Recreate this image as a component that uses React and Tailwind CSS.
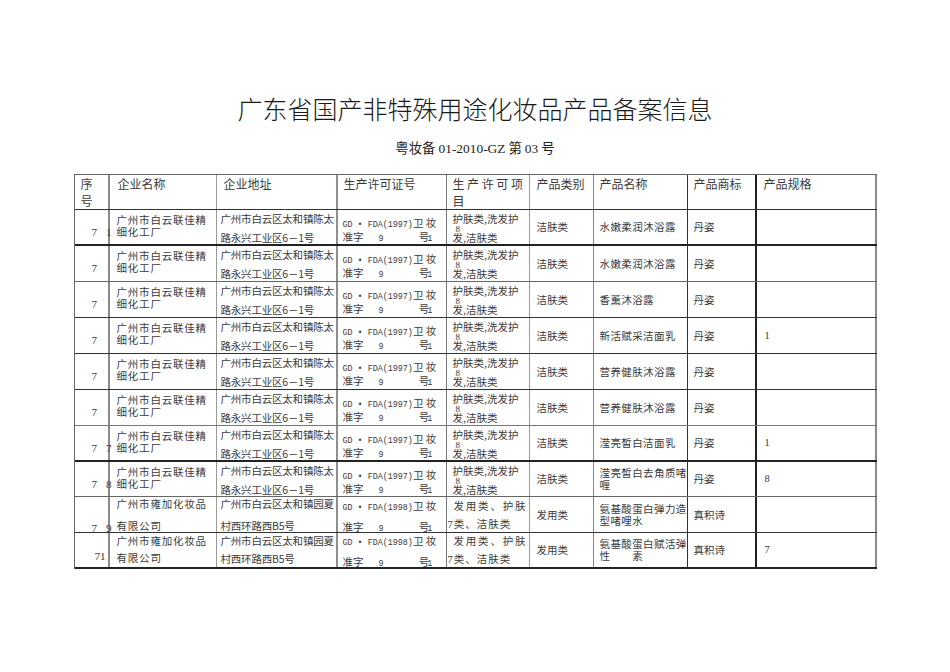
import React from 'react'

const cjk = '"Noto Sans CJK SC", "Liberation Serif", serif'
const serif = '"Liberation Serif", "Noto Sans CJK SC", serif'
const mono = '"Liberation Mono", "Noto Sans CJK SC", monospace'

// column widths incl. right border, literal classes
const C = [
  'w-[35px] border-r-2 border-[#8a8a8a]',
  'w-[107px] border-r border-[#9a9a9a]',
  'w-[121px] border-r-2 border-[#8f8f8f]',
  'w-[109px] border-r border-[#777]',
  'w-[83px] border-r border-[#999]',
  'w-[64px] border-r border-[#888]',
  'w-[94px] border-r border-[#333]',
  'w-[69px] border-r-2 border-[#222]',
  'w-[120px] border-r-2 border-[#8a8a8a]',
]

const liangA = ['广州市白云联佳精', '细化工厂']
const addrA = ['广州市白云区太和镇陈太', '路永兴工业区6－1号']
const liangB = ['广州市雍加化妆品', '有限公司']
const addrB = ['广州市白云区太和镇园夏', '村西环路西B5号']

const rows = [
  { idx: '7', sub: '1', mode: 'A', year: '1997', cat: '洁肤类', name: ['水嫩柔润沐浴露'], brand: '丹姿', spec: '', h: 'h-[36px] border-b-2 border-[#222]' },
  { idx: '7', mode: 'A', year: '1997', cat: '洁肤类', name: ['水嫩柔润沐浴露'], brand: '丹姿', spec: '', h: 'h-[36px] border-b border-[#666]' },
  { idx: '7', mode: 'A', year: '1997', cat: '洁肤类', name: ['香薰沐浴露'], brand: '丹姿', spec: '', h: 'h-[36px] border-b border-[#333]' },
  { idx: '7', mode: 'A', year: '1997', cat: '洁肤类', name: ['新活赋采洁面乳'], brand: '丹姿', spec: '1', h: 'h-[36px] border-b border-[#333]' },
  { idx: '7', mode: 'A', year: '1997', cat: '洁肤类', name: ['营养健肤沐浴露'], brand: '丹姿', spec: '', h: 'h-[36px] border-b border-[#333]' },
  { idx: '7', mode: 'A', year: '1997', cat: '洁肤类', name: ['营养健肤沐浴露'], brand: '丹姿', spec: '', h: 'h-[36px] border-b border-[#777]' },
  { idx: '7', sub: '7', mode: 'A', year: '1997', cat: '洁肤类', name: ['滢亮皙白洁面乳'], brand: '丹姿', spec: '1', h: 'h-[36px] border-b-2 border-[#222]' },
  { idx: '7', sub: '8', mode: 'A', year: '1997', cat: '洁肤类', name: ['滢亮皙白去角质啫', '喱'], brand: '丹姿', spec: '8', h: 'h-[35px] border-b border-[#666]' },
  { idx: '7', sub: '9', mode: 'B', year: '1998', cat: '发用类', name: ['氨基酸蛋白弹力造', '型啫哩水'], brand: '真积诗', spec: '', h: 'h-[36px] border-b border-[#333]' },
  { idx: '71', mode: 'B', tight: true, year: '1998', cat: '发用类', name: ['氨基酸蛋白赋活弹', '性\u3000\u3000素'], brand: '真积诗', spec: '7', h: 'h-[36px] border-b-2 border-[#222]' },
]

function Row({ r }) {
  const a = r.mode === 'A'
  const comp = a ? liangA : liangB
  const addr = a ? addrA : addrB
  const idxPad = a ? 'pt-[16px]' : r.tight ? 'pt-[17px]' : 'pt-[25px]'
  const two = a ? 'pt-[4px]' : r.tight ? 'pt-[2px] gap-[5px]' : 'pt-[1px] gap-[10px]'
  const twoAddr = a ? 'pt-[3px] gap-[7px]' : r.tight ? 'pt-[2px] gap-[6px]' : 'pt-[1px] gap-[10px]'
  const lic = a ? 'pt-[7px] gap-0' : r.tight ? 'pt-[2px] gap-[7px]' : 'pt-[3px] gap-[7px]'
  const proj = r.tight ? 'pt-[2px] gap-[6px]' : 'pt-[3px] gap-[6px]'
  return (
    <div className={`flex ${r.h} text-[#3a3a3a]`}>
      <div className={`${C[0]} flex ${idxPad} ${r.idx === '71' ? 'pl-[20px]' : 'pl-[17px]'} text-[11px] leading-[12px]`} style={{ fontFamily: serif }}>
        <span>{r.idx}</span>
        {r.sub && <span className="ml-[9px] -mr-[4px]">{r.sub}</span>}
      </div>
      <div className={`${C[1]} flex flex-col pl-[7px] text-[10.5px] leading-[12px] tracking-[0.8px] ${two}`}>
        <span>{comp[0]}</span>
        <span>{comp[1]}</span>
      </div>
      <div className={`${C[2]} flex flex-col pl-[4px] text-[10.5px] leading-[12px] tracking-[-0.2px] ${twoAddr} whitespace-nowrap`}>
        <span>{addr[0]}</span>
        <span>{addr[1]}</span>
      </div>
      <div className={`${C[3]} flex flex-col pl-[5px] text-[8.4px] leading-[11px] whitespace-pre ${lic}`} style={{ fontFamily: mono }}>
        <span>{`GD • FDA(${r.year})`}<span style={{ fontFamily: cjk }} className="text-[10.5px]">卫 妆</span></span>
        <span><span style={{ fontFamily: cjk }} className="text-[10.5px]">准字</span>{'   9       '}<span style={{ fontFamily: cjk }} className="text-[10.5px]">号</span><span className="-ml-[2px]">1</span></span>
      </div>
      <div className={`${C[4]} relative flex flex-col pl-[6px] text-[10.5px] leading-[12px] whitespace-nowrap ${a ? 'pt-[3px] gap-[7px]' : proj}`}>
        {a ? (
          <>
            <span>护肤类,洗发护</span>
            <span>发,洁肤类</span>
            <span className="absolute left-[9px] top-[15px] text-[9px] leading-[9px]" style={{ fontFamily: serif }}>8</span>
          </>
        ) : (
          <>
            <span className="pl-[1px] tracking-[1.8px]">发用类、护肤</span>
            <span className="-ml-[5px] tracking-[1px]"><span style={{ fontFamily: serif }}>7</span>类、洁肤类</span>
          </>
        )}
      </div>
      <div className={`${C[5]} flex items-center pl-[7px] text-[10.5px]`}>{r.cat}</div>
      <div className={`${C[6]} flex flex-col justify-center pl-[6px] text-[10.5px] leading-[12px] tracking-[0.4px] whitespace-nowrap`}>
        {r.name.map((n, i) => <span key={i}>{n}</span>)}
      </div>
      <div className={`${C[7]} flex items-center pl-[6px] text-[10.5px]`}>{r.brand}</div>
      <div className={`${C[8]} flex items-center pl-[8px] text-[10.5px]`} style={{ fontFamily: serif }}>{r.spec}</div>
    </div>
  )
}

export default function App() {
  return (
    <div className="w-[950px] h-[672px] bg-white overflow-hidden" style={{ fontFamily: cjk }}>
      <div className="pt-[96px] text-center text-[25px] leading-[24px] font-light text-[#1a1a1a]">广东省国产非特殊用途化妆品产品备案信息</div>
      <div className="mt-[20px] text-center text-[13.4px] leading-[14px] text-[#222]">
        粤妆备 <span style={{ fontFamily: serif }}>01-2010-GZ</span> 第 <span style={{ fontFamily: serif }}>03</span> 号
      </div>
      <div className="mt-[18px] mx-auto w-[803px] border-l border-t border-[#666] text-[#3a3a3a]">
        <div className="flex h-[35px] border-b border-[#333] text-[12px]">
          <div className={`${C[0]} flex flex-col pl-[6px] leading-[17px]`}><span>序</span><span>号</span></div>
          <div className={`${C[1]} pl-[8px] pt-[1px] leading-[16px]`}>企业名称</div>
          <div className={`${C[2]} pl-[7px] pt-[1px] leading-[16px]`}>企业地址</div>
          <div className={`${C[3]} pl-[6px] pt-[1px] leading-[16px]`}>生产许可证号</div>
          <div className={`${C[4]} flex flex-col pl-[6px] leading-[17px]`}><span className="tracking-[2.6px] whitespace-nowrap">生产许可项</span><span>目</span></div>
          <div className={`${C[5]} pl-[7px] pt-[1px] leading-[16px]`}>产品类别</div>
          <div className={`${C[6]} pl-[6px] pt-[1px] leading-[16px]`}>产品名称</div>
          <div className={`${C[7]} pl-[6px] pt-[1px] leading-[16px]`}>产品商标</div>
          <div className={`${C[8]} pl-[7px] pt-[1px] leading-[16px]`}>产品规格</div>
        </div>
        {rows.map((r, i) => <Row key={i} r={r} />)}
      </div>
    </div>
  )
}
